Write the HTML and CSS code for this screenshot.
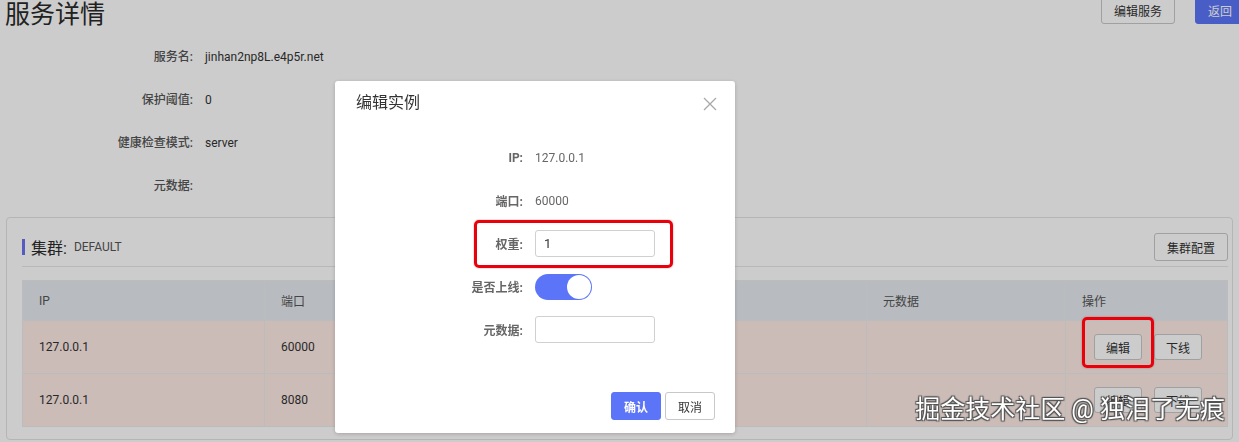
FILE: index.html
```html
<!DOCTYPE html>
<html lang="zh-CN">
<head>
  <meta charset="UTF-8" />
  <title>服务详情</title>
  <link rel="stylesheet" href="styles.css">
</head>
<body>

<div class="page">
  <div class="page-head">
    <h1>服务详情</h1>
    <div class="head-actions">
      <button class="btn">编辑服务</button>
      <button class="btn btn-primary btn-back">返回</button>
    </div>
  </div>

  <div class="info">
    <div class="info-row"><span class="info-label">服务名:</span><span class="info-value">jinhan2np8L.e4p5r.net</span></div>
    <div class="info-row"><span class="info-label">保护阈值:</span><span class="info-value">0</span></div>
    <div class="info-row"><span class="info-label">健康检查模式:</span><span class="info-value">server</span></div>
    <div class="info-row"><span class="info-label">元数据:</span><span class="info-value"></span></div>
  </div>

  <div class="card">
    <div class="card-head">
      <div class="card-title"><span class="bar"></span>集群: <small>DEFAULT</small></div>
      <button class="btn">集群配置</button>
    </div>

    <table class="instances">
      <colgroup>
        <col style="width: 242px">
        <col style="width: 200px">
        <col style="width: 200px">
        <col style="width: 202px">
        <col style="width: 199px">
        <col>
      </colgroup>
      <thead>
        <tr><th>IP</th><th>端口</th><th>权重</th><th>健康状态</th><th>元数据</th><th>操作</th></tr>
      </thead>
      <tbody>
        <tr>
          <td>127.0.0.1</td><td>60000</td><td></td><td></td><td></td>
          <td><button class="btn btn-sm">编辑</button><button class="btn btn-sm">下线</button></td>
        </tr>
        <tr>
          <td>127.0.0.1</td><td>8080</td><td></td><td></td><td></td>
          <td><button class="btn btn-sm">编辑</button><button class="btn btn-sm">下线</button></td>
        </tr>
      </tbody>
    </table>
  </div>
</div>

<div class="mask"></div>

<div class="dialog">
  <div class="dialog-head">
    <span class="dialog-title">编辑实例</span>
    <svg class="dialog-close" width="14" height="14" viewBox="0 0 14 14">
      <path d="M1 1 L13 13 M13 1 L1 13" stroke="#a8a8a8" stroke-width="1.3" fill="none"/>
    </svg>
  </div>
  <div class="dialog-body">
    <div class="form-row"><label>IP:</label><span class="form-text">127.0.0.1</span></div>
    <div class="form-row"><label>端口:</label><span class="form-text">60000</span></div>
    <div class="form-row"><label>权重:</label><input class="input" type="text" value="1"></div>
    <div class="form-row"><label>是否上线:</label><span class="switch"><span class="knob"></span></span></div>
    <div class="form-row"><label>元数据:</label><input class="input" type="text" value=""></div>
  </div>
  <div class="dialog-foot">
    <button class="btn btn-primary btn-bold">确认</button>
    <button class="btn">取消</button>
  </div>
</div>

<div class="mark mark-weight"></div>
<div class="mark mark-edit"></div>

<div class="watermark">掘金技术社区 @ 独泪了无痕</div>

</body>
</html>
```

FILE: styles.css
```css
* {
  box-sizing: border-box;
  margin: 0;
  padding: 0;
  font-family: Roboto, "Noto Sans CJK SC", sans-serif;
}

body {
  background-color: #fff;
  color: #333;
  width: 1239px;
  height: 442px;
  overflow: hidden;
}

.page {
  padding: 0 6px;
}

.page-head {
  display: flex;
  justify-content: space-between;
  align-items: flex-start;
  height: 36px;
}

.page-head h1 {
  font-size: 25px;
  font-weight: normal;
  line-height: 30px;
  margin-left: -1px;
  color: #2a2a2a;
}

.head-actions {
  display: flex;
  gap: 20px;
  margin-top: -4px;
  margin-right: -12px;
}

.btn {
  height: 28px;
  padding: 0 12px;
  font-size: 12px;
  color: #333;
  background-color: #fff;
  border: 1px solid #c8c8c8;
  border-radius: 3px;
  cursor: pointer;
}

.btn-primary {
  background-color: #5c75f8;
  border-color: #5c75f8;
  color: #fff;
}

.btn-back {
  width: 50px;
}

.btn-bold {
  font-weight: bold;
}

.btn-sm {
  height: 26px;
  padding: 0 11px;
}

.info-row {
  display: flex;
  height: 43px;
  line-height: 43px;
  font-size: 12px;
}

.info-label {
  width: 187px;
  text-align: right;
  color: #555;
  font-weight: 500;
}

.info-value {
  margin-left: 12px;
  color: #333;
}

.card {
  margin-top: 9px;
  border: 1px solid #e3e3e3;
  border-radius: 4px;
  padding: 15px 4px 12px 15px;
}

.card-head {
  display: flex;
  justify-content: space-between;
  align-items: center;
  padding-bottom: 5px;
  border-bottom: 1px solid #e6e6e6;
}

.card-title {
  display: flex;
  align-items: center;
  font-size: 16px;
  color: #2a2a2a;
}

.card-title .bar {
  width: 3px;
  height: 16px;
  background-color: #6c72f0;
  margin-right: 6px;
}

.card-title small {
  font-size: 12px;
  color: #555;
  margin-left: 7px;
}

.instances {
  width: 1206px;
  margin-top: 13px;
  border-collapse: collapse;
  table-layout: fixed;
  font-size: 12px;
}

.instances th,
.instances td {
  text-align: left;
  font-weight: normal;
  padding: 0 16px;
  border: 1px solid #ebebeb;
}

.instances th {
  height: 40px;
  background-color: #e7ebf0;
  color: #555;
}

.instances td {
  height: 53px;
  background-color: #feebe5;
  color: #333;
}

.instances td .btn + .btn {
  margin-left: 12px;
}

.instances td:last-child {
  padding-left: 28px;
}

.mask {
  position: fixed;
  inset: 0;
  background-color: rgba(0, 0, 0, 0.2);
}

.dialog {
  position: fixed;
  left: 335px;
  top: 81px;
  width: 400px;
  height: 352px;
  background-color: #fff;
  border-radius: 3px;
  box-shadow: 0 1px 4px rgba(0, 0, 0, 0.2);
  display: flex;
  flex-direction: column;
}

.dialog-head {
  display: flex;
  justify-content: space-between;
  align-items: flex-start;
  padding: 12px 18px 0 21px;
  height: 42px;
}

.dialog-title {
  font-size: 16px;
  line-height: 20px;
  color: #333;
}

.dialog-close {
  margin-top: 4px;
}

.dialog-body {
  padding-top: 21px;
  display: flex;
  flex-direction: column;
  gap: 16px;
  flex: 1;
}

.form-row {
  display: flex;
  align-items: center;
  height: 27px;
  font-size: 12px;
}

.form-row label {
  width: 200px;
  padding-right: 12px;
  text-align: right;
  font-weight: bold;
  color: #666;
}

.form-text {
  color: #666;
}

.input {
  width: 120px;
  height: 27px;
  border: 1px solid #d0d0d0;
  border-radius: 3px;
  padding: 0 8px;
  font-size: 13px;
  color: #333;
  outline: none;
}

.switch {
  width: 57px;
  height: 26px;
  border-radius: 13px;
  background-color: #5c75f8;
  display: flex;
  justify-content: flex-end;
  align-items: center;
  padding: 1px;
}

.knob {
  width: 24px;
  height: 24px;
  border-radius: 50%;
  background-color: #fff;
}

.dialog-foot {
  display: flex;
  justify-content: flex-end;
  gap: 4px;
  padding: 0 20px 13px;
}

.mark {
  position: fixed;
  border: 3px solid #e8000b;
  border-radius: 5px;
  box-shadow: 0 0 2px rgba(120, 0, 0, 0.4);
}

.mark-weight {
  left: 474px;
  top: 220px;
  width: 199px;
  height: 48px;
}

.mark-edit {
  left: 1082px;
  top: 317px;
  width: 72px;
  height: 51px;
}

.watermark {
  position: fixed;
  right: 14px;
  top: 393px;
  font-size: 25px;
  line-height: 34px;
  color: #fff;
  text-shadow: 0 0 1px #444, 1px 1px 1px #555, -1px -1px 1px #555, 1px -1px 1px #555, -1px 1px 1px #555;
  white-space: nowrap;
}
```
